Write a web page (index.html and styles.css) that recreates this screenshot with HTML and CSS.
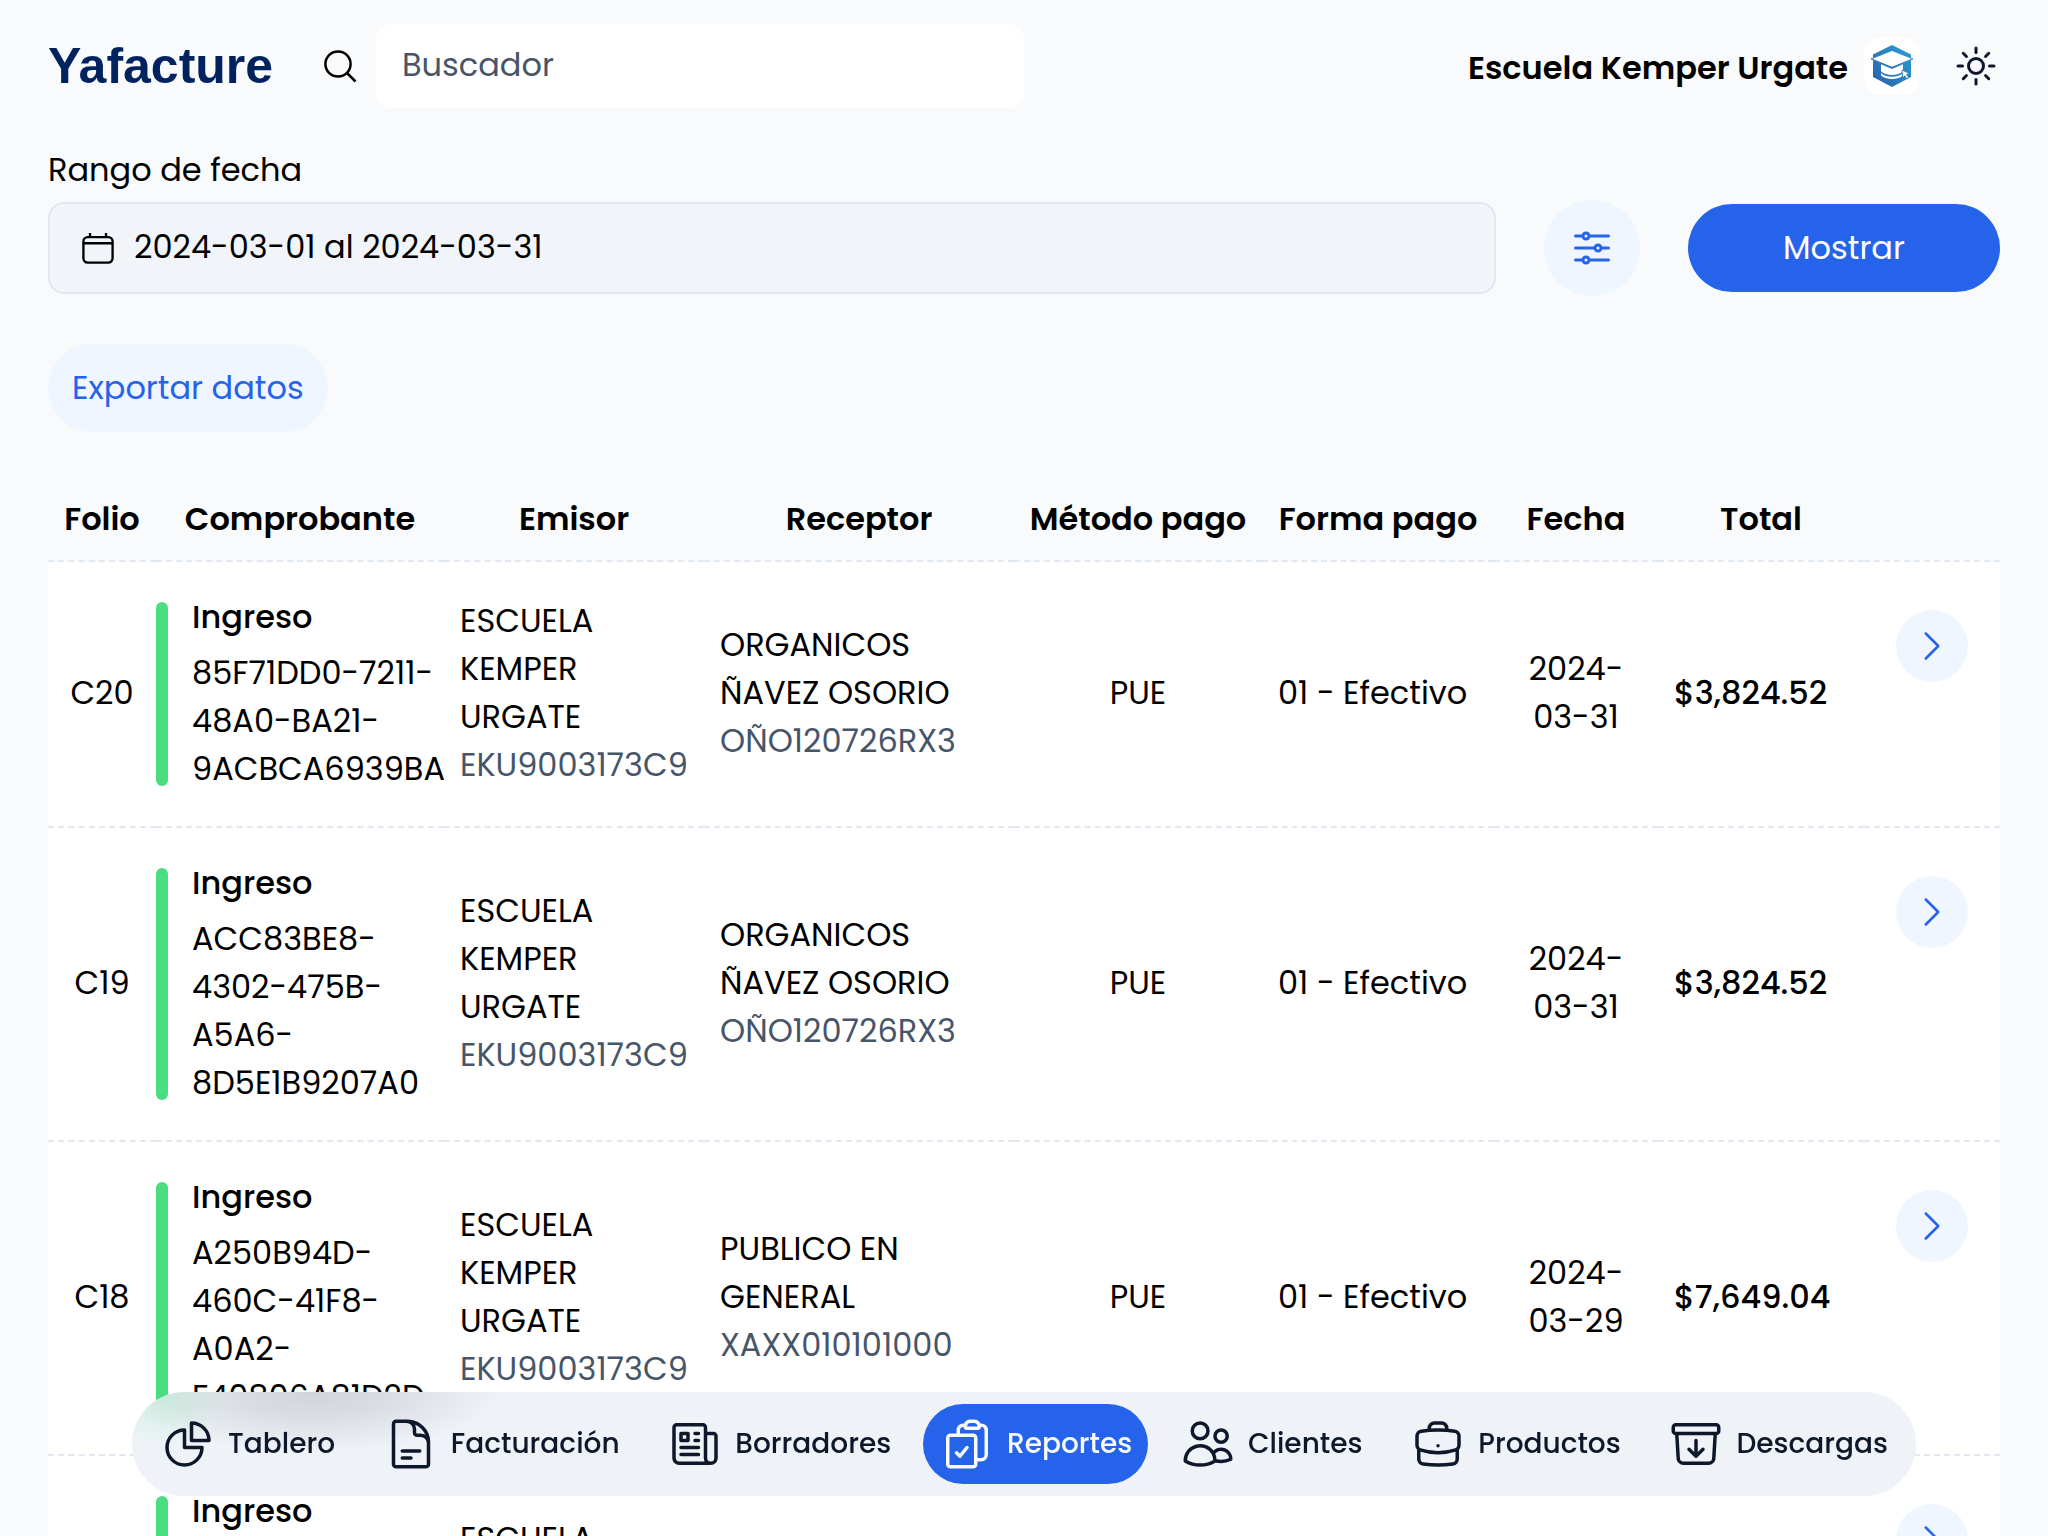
FILE: index.html
```html
<!DOCTYPE html>
<html lang="es">
<head>
<meta charset="utf-8">
<meta name="viewport" content="width=device-width, initial-scale=1">
<title>Yafacture - Reportes</title>
<link rel="stylesheet" href="styles.css">
</head>
<body>
<header class="topbar">
  <a class="brand" href="#">Yafacture</a>
  <form class="search" role="search">
    <label class="search-label" for="q" aria-label="Buscar">
      <svg class="icon-search" viewBox="0 0 32 32" aria-hidden="true"><circle cx="14" cy="14" r="12.6"/><path d="M22.5 22.5l9 9"/></svg>
    </label>
    <input class="search-input" id="q" type="search" placeholder="Buscador">
  </form>
  <div class="account">
    <span class="account-name">Escuela Kemper Urgate</span>
    <svg class="account-logo" viewBox="0 0 56 56" aria-hidden="true">
      <defs><linearGradient id="hex" x1="1" y1="0" x2="0" y2="1"><stop offset="0" stop-color="#2a9fd6"/><stop offset="1" stop-color="#2a61a8"/></linearGradient></defs>
      <path fill="url(#hex)" d="M28 7l19 9.500v22.500l-19 10-19-10v-22.500z"/>
      <path fill="#fff" stroke="url(#hex)" stroke-width="1" d="M7 20.800l21-8.300 21 8.300-21 8.500z"/>
      <path fill="#fff" d="M17 26.200l11 4.800 11-4.800v7c-5 5-17 5-22 0zM17 35c5 5 16 5 21.500.8v2.200c-5 4-17 4-21.500-.5z"/>
      <path fill="#fff" stroke="#2874b8" stroke-width=".8" d="M38 32l7.500 3.500-3 1 2.200 3-1.800 1.300-2.200-3-2 2z"/>
    </svg>
  </div>
  <button class="theme" type="button" aria-label="Cambiar tema">
    <svg class="icon icon-48" viewBox="0 0 24 24" aria-hidden="true"><path d="M12 3v2.250m6.364.386l-1.591 1.591M21 12h-2.250m-.386 6.364l-1.591-1.591M12 18.750V21m-4.773-4.227l-1.591 1.591M5.250 12H3m4.227-4.773L5.636 5.636M15.750 12a3.750 3.750 0 11-7.500 0 3.750 3.750 0 017.500 0z"/></svg>
  </button>
</header>

<main class="content">
  <form class="filters">
    <div class="field">
      <label class="field-label" for="rango">Rango de fecha</label>
      <div class="field-box">
        <svg class="icon-calendar" viewBox="0 0 34 34" aria-hidden="true"><rect x="1.500" y="5.500" width="31" height="27" rx="4.500"/><path d="M1.500 12h31M8.500 1v4.500M25.500 1v4.500"/></svg>
        <input class="field-input" id="rango" type="text" value="2024-03-01 al 2024-03-31">
      </div>
    </div>
    <button class="adjust" type="button" aria-label="Filtros">
      <svg class="icon icon-48" viewBox="0 0 24 24" aria-hidden="true"><path d="M10.500 6h9.750M10.500 6a1.500 1.500 0 11-3 0m3 0a1.500 1.500 0 10-3 0M3.750 6H7.500m3 12h9.750m-9.750 0a1.500 1.500 0 01-3 0m3 0a1.500 1.500 0 00-3 0m-3.750 0H7.500m9-6h3.750m-3.750 0a1.500 1.500 0 01-3 0m3 0a1.500 1.500 0 00-3 0m-9.750 0h9.750"/></svg>
    </button>
    <button class="show" type="button">Mostrar</button>
  </form>

  <button class="export" type="button">Exportar datos</button>

  <table class="report">
    <colgroup>
      <col class="c-folio"><col class="c-comp"><col class="c-emisor"><col class="c-receptor"><col class="c-metodo"><col class="c-forma"><col class="c-fecha"><col class="c-total"><col class="c-open">
    </colgroup>
    <thead>
      <tr><th>Folio</th><th>Comprobante</th><th>Emisor</th><th>Receptor</th><th>Método pago</th><th>Forma pago</th><th>Fecha</th><th>Total</th><th aria-label="Abrir"></th></tr>
    </thead>
    <tbody>
      <tr>
        <td>C20</td>
        <td class="comp"><div class="voucher"><strong class="kind">Ingreso</strong><span class="uuid">85F71DD0-7211-<br>48A0-BA21-<br>9ACBCA6939BA</span></div></td>
        <td class="party">ESCUELA<br>KEMPER<br>URGATE<br><span class="rfc">EKU9003173C9</span></td>
        <td class="party">ORGANICOS<br>ÑAVEZ OSORIO<br><span class="rfc">OÑO120726RX3</span></td>
        <td>PUE</td><td class="forma">01 - Efectivo</td><td>2024-<br>03-31</td><td class="total">$3,824.52</td>
        <td class="open-cell"><button class="open" type="button" aria-label="Abrir C20"><svg class="icon icon-40" viewBox="0 0 24 24" aria-hidden="true"><path d="M8.250 4.500l7.500 7.500-7.500 7.500"/></svg></button></td>
      </tr>
      <tr>
        <td>C19</td>
        <td class="comp"><div class="voucher"><strong class="kind">Ingreso</strong><span class="uuid">ACC83BE8-<br>4302-475B-<br>A5A6-<br>8D5E1B9207A0</span></div></td>
        <td class="party">ESCUELA<br>KEMPER<br>URGATE<br><span class="rfc">EKU9003173C9</span></td>
        <td class="party">ORGANICOS<br>ÑAVEZ OSORIO<br><span class="rfc">OÑO120726RX3</span></td>
        <td>PUE</td><td class="forma">01 - Efectivo</td><td>2024-<br>03-31</td><td class="total">$3,824.52</td>
        <td class="open-cell"><button class="open" type="button" aria-label="Abrir C19"><svg class="icon icon-40" viewBox="0 0 24 24" aria-hidden="true"><path d="M8.250 4.500l7.500 7.500-7.500 7.500"/></svg></button></td>
      </tr>
      <tr>
        <td>C18</td>
        <td class="comp"><div class="voucher"><strong class="kind">Ingreso</strong><span class="uuid">A250B94D-<br>460C-41F8-<br>A0A2-<br>F40806A81D2D</span></div></td>
        <td class="party">ESCUELA<br>KEMPER<br>URGATE<br><span class="rfc">EKU9003173C9</span></td>
        <td class="party">PUBLICO EN<br>GENERAL<br><span class="rfc">XAXX010101000</span></td>
        <td>PUE</td><td class="forma">01 - Efectivo</td><td>2024-<br>03-29</td><td class="total">$7,649.04</td>
        <td class="open-cell"><button class="open" type="button" aria-label="Abrir C18"><svg class="icon icon-40" viewBox="0 0 24 24" aria-hidden="true"><path d="M8.250 4.500l7.500 7.500-7.500 7.500"/></svg></button></td>
      </tr>
      <tr>
        <td>C17</td>
        <td class="comp"><div class="voucher"><strong class="kind">Ingreso</strong><span class="uuid">B7D1C05E-<br>49A2-4E10-<br>9C3F-<br>20A4D7E8B613</span></div></td>
        <td class="party">ESCUELA<br>KEMPER<br>URGATE<br><span class="rfc">EKU9003173C9</span></td>
        <td class="party">PUBLICO EN<br>GENERAL<br><span class="rfc">XAXX010101000</span></td>
        <td>PUE</td><td class="forma">01 - Efectivo</td><td>2024-<br>03-29</td><td class="total">$7,649.04</td>
        <td class="open-cell"><button class="open" type="button" aria-label="Abrir C17"><svg class="icon icon-40" viewBox="0 0 24 24" aria-hidden="true"><path d="M8.250 4.500l7.500 7.500-7.500 7.500"/></svg></button></td>
      </tr>
    </tbody>
  </table>
</main>

<nav class="dock" aria-label="Principal">
  <a class="dock-item" href="#"><svg class="icon icon-56" viewBox="0 0 24 24" aria-hidden="true"><path d="M10.500 6a7.500 7.500 0 107.500 7.500h-7.500V6z"/><path d="M13.500 10.500H21A7.500 7.500 0 0013.500 3v7.500z"/></svg>Tablero</a>
  <a class="dock-item" href="#"><svg class="icon icon-56" viewBox="0 0 24 24" aria-hidden="true"><path d="M19.500 14.250v-2.625a3.375 3.375 0 00-3.375-3.375h-1.500A1.125 1.125 0 0113.500 7.125v-1.500a3.375 3.375 0 00-3.375-3.375H8.250m0 12.750h7.500m-7.500 3H12M10.500 2.250H5.625c-.621 0-1.125.504-1.125 1.125v17.250c0 .621.504 1.125 1.125 1.125h12.750c.621 0 1.125-.504 1.125-1.125V11.250a9 9 0 00-9-9z"/></svg>Facturación</a>
  <a class="dock-item" href="#"><svg class="icon icon-56" viewBox="0 0 24 24" aria-hidden="true"><path d="M12 7.500h1.500m-1.500 3h1.500m-7.500 3h7.500m-7.500 3h7.500m3-9h3.375c.621 0 1.125.504 1.125 1.125V18a2.250 2.250 0 01-2.250 2.250M16.500 7.500V18a2.250 2.250 0 002.250 2.250M16.500 7.500V4.875c0-.621-.504-1.125-1.125-1.125H4.125C3.504 3.750 3 4.254 3 4.875V18a2.250 2.250 0 002.250 2.250h13.500M6 7.500h3v3H6v-3z"/></svg>Borradores</a>
  <a class="dock-item is-active" href="#" aria-current="page"><svg class="icon icon-56" viewBox="0 0 24 24" aria-hidden="true"><path d="M11.350 3.836c-.065.210-.1.433-.1.664 0 .414.336.750.750.750h4.500a.750.750 0 00.750-.750 2.250 2.250 0 00-.1-.664m-5.800 0A2.251 2.251 0 0113.500 2.250H15c1.012 0 1.867.668 2.150 1.586m-5.800 0c-.376.023-.750.050-1.124.080C9.095 4.010 8.250 4.973 8.250 6.108V8.250m8.900-4.414c.376.023.750.050 1.124.080 1.131.094 1.976 1.057 1.976 2.192V16.500A2.250 2.250 0 0118 18.750h-2.250m-7.500-10.500H4.875c-.621 0-1.125.504-1.125 1.125v11.250c0 .621.504 1.125 1.125 1.125h9.750c.621 0 1.125-.504 1.125-1.125V18.750m-7.500-10.500h6.375c.621 0 1.125.504 1.125 1.125v9.375m-8.250-3l1.500 1.500 3-3.750"/></svg>Reportes</a>
  <a class="dock-item" href="#"><svg class="icon icon-56" viewBox="0 0 24 24" aria-hidden="true"><path d="M15 19.128a9.380 9.380 0 002.625.372 9.337 9.337 0 004.121-.952 4.125 4.125 0 00-7.533-2.493M15 19.128v-.003c0-1.113-.285-2.160-.786-3.070M15 19.128v.106A12.318 12.318 0 018.624 21c-2.331 0-4.512-.645-6.374-1.766l-.001-.109a6.375 6.375 0 0111.964-3.070M12 6.375a3.375 3.375 0 11-6.750 0 3.375 3.375 0 016.750 0zm8.250 2.250a2.625 2.625 0 11-5.250 0 2.625 2.625 0 015.250 0z"/></svg>Clientes</a>
  <a class="dock-item" href="#"><svg class="icon icon-56" viewBox="0 0 24 24" aria-hidden="true"><path d="M20.250 14.150v4.250c0 1.094-.787 2.036-1.872 2.180-2.087.277-4.216.420-6.378.420s-4.291-.143-6.378-.420c-1.085-.144-1.872-1.086-1.872-2.180v-4.250m16.500 0a2.180 2.180 0 00.750-1.661V8.706c0-1.081-.768-2.015-1.837-2.175a48.114 48.114 0 00-3.413-.387m4.500 8.006c-.194.165-.420.295-.673.380A23.978 23.978 0 0112 15.750c-2.648 0-5.195-.429-7.577-1.220a2.016 2.016 0 01-.673-.380m0 0A2.180 2.180 0 013 12.489V8.706c0-1.081.768-2.015 1.837-2.175a48.111 48.111 0 013.413-.387m7.500 0V5.250A2.250 2.250 0 0013.500 3h-3a2.250 2.250 0 00-2.250 2.250v.894m7.500 0a48.667 48.667 0 00-7.500 0M12 12.750h.008v.008H12v-.008z"/></svg>Productos</a>
  <a class="dock-item" href="#"><svg class="icon icon-56" viewBox="0 0 24 24" aria-hidden="true"><path d="M20.250 7.500l-.625 10.632a2.250 2.250 0 01-2.247 2.118H6.622a2.250 2.250 0 01-2.247-2.118L3.750 7.500m8.250 3v6.750m0 0l-3-3m3 3l3-3M3.375 7.500h17.250c.621 0 1.125-.504 1.125-1.125v-1.500c0-.621-.504-1.125-1.125-1.125H3.375c-.621 0-1.125.504-1.125 1.125v1.500c0 .621.504 1.125 1.125 1.125z"/></svg>Descargas</a>
</nav>
</body>
</html>
```

FILE: styles.css
```css
*, *::before, *::after { box-sizing: border-box; }

body {
  display: flex;
  flex-direction: column;
  height: 100vh;
  margin: 0;
  overflow: hidden;
  background: #f8fafc;
  color: #000;
  font-family: Poppins, Inter, "Open Sans", sans-serif;
  font-size: 32px;
  line-height: 48px;
}

button, input {
  padding: 0;
  border: 0;
  background: none;
  color: inherit;
  font: inherit;
}

button { cursor: pointer; }

.icon {
  display: block;
  flex: none;
  fill: none;
  stroke: currentColor;
  stroke-width: 1.5;
  stroke-linecap: round;
  stroke-linejoin: round;
}
.icon-40 { width: 40px; height: 40px; }
.icon-48 { width: 48px; height: 48px; }
.icon-56 { width: 56px; height: 56px; }

/* Top bar */
.topbar {
  display: flex;
  flex: none;
  align-items: center;
  padding: 24px 48px;
}
.brand {
  width: 276px;
  color: #00235f;
  font-family: "Liberation Sans", Arial, sans-serif;
  font-size: 50px;
  font-weight: 700;
  text-decoration: none;
}
.search { display: flex; align-items: center; gap: 20px; }
.icon-search {
  display: block;
  width: 32px;
  height: 32px;
  overflow: visible;
  fill: none;
  stroke: #000;
  stroke-width: 2.5;
}
.search-input {
  width: 648px;
  height: 84px;
  padding: 0 26px 2px;
  border-radius: 16px;
  background: #fff;
  appearance: none;
}
.search-input::placeholder { color: #475569; opacity: 1; }
.account {
  display: flex;
  align-items: center;
  gap: 16px;
  margin-left: auto;
  font-weight: 600;
}
.account-name { padding-top: 4px; }
.account-logo { width: 56px; height: 56px; border-radius: 16px; background: #fff; }
.theme { margin-left: 32px; color: #0f172a; }

/* Filters */
.content {
  flex: 1;
  min-height: 0;
  padding: 14px 48px 0;
  overflow: hidden auto;
  scrollbar-width: none;
}
.filters { display: flex; align-items: flex-end; gap: 48px; }
.field { flex: 1; display: flex; flex-direction: column; gap: 8px; }
.field-box {
  display: flex;
  align-items: center;
  gap: 20px;
  height: 92px;
  padding: 0 32px;
  border: 2px solid #e2e8f0;
  border-radius: 16px;
  background: #f1f4f9;
}
.icon-calendar { flex: none; width: 32px; height: 32px; fill: none; stroke: #000; stroke-width: 2.5; }
.field-input { flex: 1; padding-bottom: 2px; }
.adjust {
  display: grid;
  place-items: center;
  width: 96px;
  height: 96px;
  margin-bottom: -2px;
  border-radius: 50%;
  background: #eff6ff;
  color: #2563eb;
}
.show {
  width: 312px;
  height: 88px;
  margin-bottom: 2px;
  border-radius: 44px;
  background: #2563eb;
  color: #fff;
}
.export {
  height: 88px;
  margin-top: 50px;
  padding: 0 24px;
  border-radius: 44px;
  background: #eff6ff;
  color: #2563eb;
}

/* Report table */
.report {
  width: 100%;
  margin-top: 48px;
  border-collapse: separate;
  border-spacing: 0;
  table-layout: fixed;
}
.c-folio { width: 108px; }
.c-comp { width: 288px; }
.c-emisor { width: 260px; }
.c-metodo { width: 248px; }
.c-forma { width: 232px; }
.c-fecha { width: 164px; }
.c-total { width: 206px; }
.c-open { width: 136px; }
th, td {
  border-bottom: 2px dashed #e2e8f0;
  text-align: center;
  white-space: nowrap;
}
th { height: 82px; padding: 0 0 2px; font-weight: 600; }
td { padding: 31px 0 33px; background: #fff; }
td.comp { text-align: left; }
td.party { padding-left: 16px; text-align: left; }
td.forma { padding-left: 16px; text-align: left; }
td.total { padding-left: 16px; font-weight: 500; text-align: left; }
.voucher { position: relative; display: flex; flex-direction: column; gap: 8px; padding-left: 36px; }
.voucher::before {
  position: absolute;
  inset: 9px auto 7px 0;
  width: 12px;
  border-radius: 6px;
  background: #4ade80;
  content: "";
}
.kind { font-weight: 500; }
.rfc { color: #475569; }
td.open-cell { padding: 48px 0 0 32px; vertical-align: top; }
.open {
  display: grid;
  place-items: center;
  width: 72px;
  height: 72px;
  border-radius: 50%;
  background: #eff6ff;
  color: #2563eb;
}

.dock {
  position: fixed;
  right: 132px;
  bottom: 40px;
  left: 132px;
  display: flex;
  justify-content: space-between;
  padding: 12px;
  border-radius: 52px;
  background:
    radial-gradient(60px 46px at 32px 8px, rgba(74, 222, 128, .18), transparent) no-repeat,
    radial-gradient(190px 60px at 180px 0, rgba(60, 64, 72, .17), rgba(60, 64, 72, .12) 40%, transparent) no-repeat,
    #eff3f8;
}
.dock-item {
  display: flex;
  align-items: center;
  gap: 12px;
  height: 80px;
  padding: 0 16px;
  border-radius: 40px;
  color: #0f172a;
  font-size: 28px;
  font-weight: 500;
  text-decoration: none;
}
.dock-item.is-active { background: #2563eb; color: #f8fafc; }
```
